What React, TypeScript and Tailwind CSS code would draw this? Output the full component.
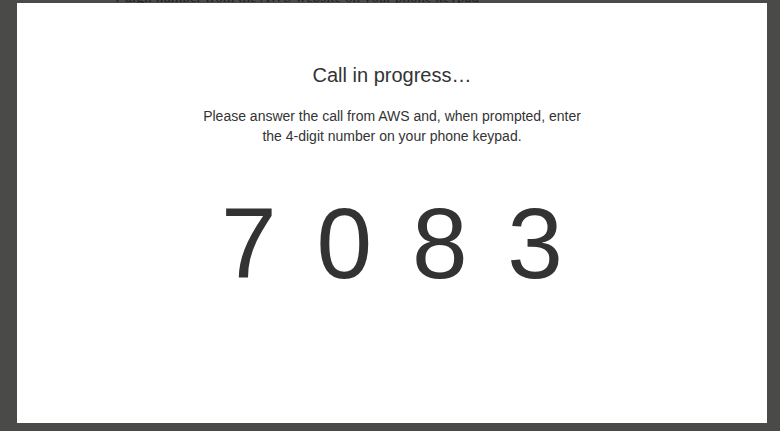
export default function App() {
  return (
    <div className="relative w-[780px] h-[431px] overflow-hidden bg-[#4a4b49] pt-[3px] pl-[17px] font-['Liberation_Sans',Arial,sans-serif]">
      {/* page text behind the overlay */}
      <div className="absolute left-[112px] top-[-12px] text-[15px] leading-[18px] text-[#1f1f1f] font-['Liberation_Serif',serif]">
        4-digit number from the AWS website on your phone keypad
      </div>
      <div className="relative w-[750px] h-[420px] bg-white flex flex-col items-center text-[#333333]">
        <h2 className="mt-[58px] text-[20px] leading-[28px]">Call in progress…</h2>
        <p className="mt-[17px] w-[400px] text-center text-[14px] leading-[20px]">
          Please answer the call from AWS and, when prompted, enter the 4-digit number on your phone keypad.
        </p>
        <div className="mt-[42px] pl-[6px] text-[100px] leading-[110px] tracking-[6px] whitespace-pre">7 0 8 3</div>
      </div>
    </div>
  );
}
